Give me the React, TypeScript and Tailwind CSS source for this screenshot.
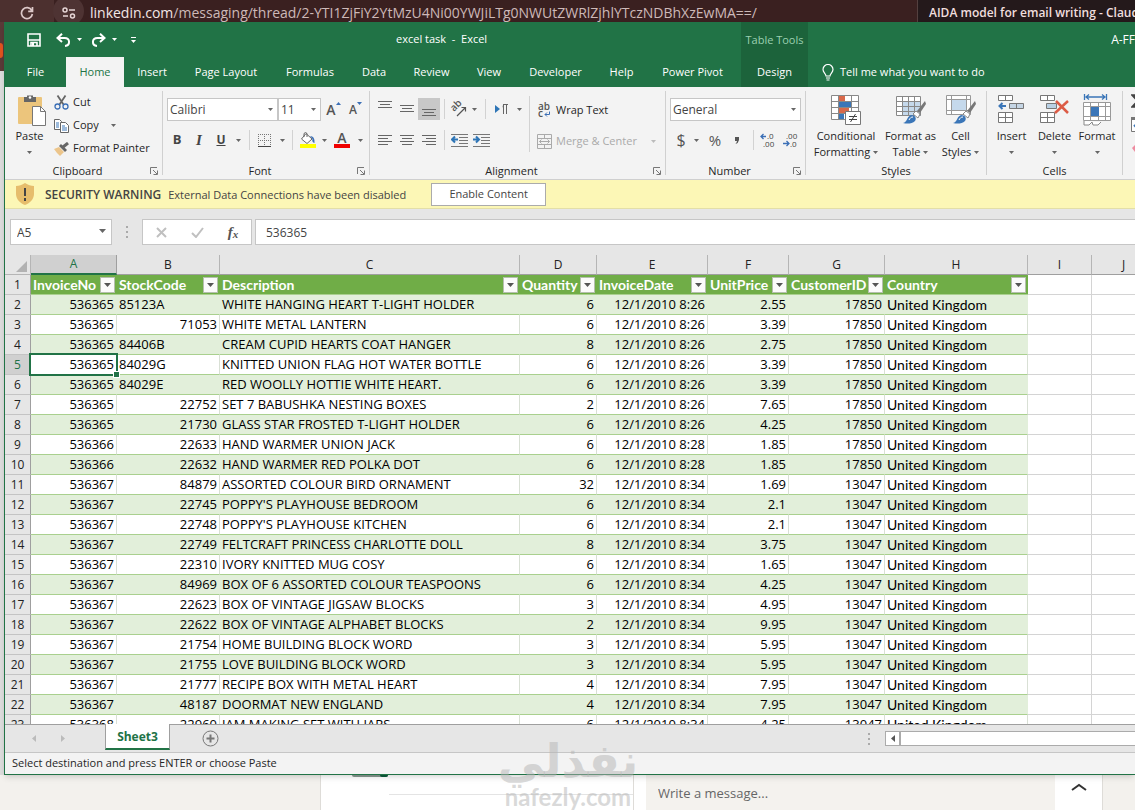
import type { ReactNode } from "react";
import clsx from "clsx";

type Row = [string, string, string, string, string, string, string];

// invoice, stock code, description, quantity, time, price, customer
const rows: Row[] = [
  ["536365", "85123A", "WHITE HANGING HEART T-LIGHT HOLDER", "6", "8:26", "2.55", "17850"],
  ["536365", "71053", "WHITE METAL LANTERN", "6", "8:26", "3.39", "17850"],
  ["536365", "84406B", "CREAM CUPID HEARTS COAT HANGER", "8", "8:26", "2.75", "17850"],
  ["536365", "84029G", "KNITTED UNION FLAG HOT WATER BOTTLE", "6", "8:26", "3.39", "17850"],
  ["536365", "84029E", "RED WOOLLY HOTTIE WHITE HEART.", "6", "8:26", "3.39", "17850"],
  ["536365", "22752", "SET 7 BABUSHKA NESTING BOXES", "2", "8:26", "7.65", "17850"],
  ["536365", "21730", "GLASS STAR FROSTED T-LIGHT HOLDER", "6", "8:26", "4.25", "17850"],
  ["536366", "22633", "HAND WARMER UNION JACK", "6", "8:28", "1.85", "17850"],
  ["536366", "22632", "HAND WARMER RED POLKA DOT", "6", "8:28", "1.85", "17850"],
  ["536367", "84879", "ASSORTED COLOUR BIRD ORNAMENT", "32", "8:34", "1.69", "13047"],
  ["536367", "22745", "POPPY'S PLAYHOUSE BEDROOM", "6", "8:34", "2.1", "13047"],
  ["536367", "22748", "POPPY'S PLAYHOUSE KITCHEN", "6", "8:34", "2.1", "13047"],
  ["536367", "22749", "FELTCRAFT PRINCESS CHARLOTTE DOLL", "8", "8:34", "3.75", "13047"],
  ["536367", "22310", "IVORY KNITTED MUG COSY", "6", "8:34", "1.65", "13047"],
  ["536367", "84969", "BOX OF 6 ASSORTED COLOUR TEASPOONS", "6", "8:34", "4.25", "13047"],
  ["536367", "22623", "BOX OF VINTAGE JIGSAW BLOCKS", "3", "8:34", "4.95", "13047"],
  ["536367", "22622", "BOX OF VINTAGE ALPHABET BLOCKS", "2", "8:34", "9.95", "13047"],
  ["536367", "21754", "HOME BUILDING BLOCK WORD", "3", "8:34", "5.95", "13047"],
  ["536367", "21755", "LOVE BUILDING BLOCK WORD", "3", "8:34", "5.95", "13047"],
  ["536367", "21777", "RECIPE BOX WITH METAL HEART", "4", "8:34", "7.95", "13047"],
  ["536367", "48187", "DOORMAT NEW ENGLAND", "4", "8:34", "7.95", "13047"],
  ["536368", "22960", "JAM MAKING SET WITH JARS", "6", "8:34", "4.25", "13047"],
];

const columns = [
  { letter: "A", title: "InvoiceNo", width: "w-[86px]" },
  { letter: "B", title: "StockCode", width: "w-[103px]" },
  { letter: "C", title: "Description", width: "w-[300px]" },
  { letter: "D", title: "Quantity", width: "w-[77px]" },
  { letter: "E", title: "InvoiceDate", width: "w-[111px]" },
  { letter: "F", title: "UnitPrice", width: "w-[81px]" },
  { letter: "G", title: "CustomerID", width: "w-[96px]" },
  { letter: "H", title: "Country", width: "w-[143px]" },
  { letter: "I", title: "", width: "w-[64px]" },
  { letter: "J", title: "", width: "w-[64px]" },
];

const tabs = [
  { name: "File", width: "w-[61px]" },
  { name: "Home", width: "w-[58px]" },
  { name: "Insert", width: "w-[56px]" },
  { name: "Page Layout", width: "w-[92px]" },
  { name: "Formulas", width: "w-[76px]" },
  { name: "Data", width: "w-[52px]" },
  { name: "Review", width: "w-[63px]" },
  { name: "View", width: "w-[52px]" },
  { name: "Developer", width: "w-[81px]" },
  { name: "Help", width: "w-[51px]" },
  { name: "Power Pivot", width: "w-[91px]" },
];

function Svg({ w, h, children, className }: { w: number; h: number; children: ReactNode; className?: string }) {
  return (
    <svg width={w} height={h} viewBox={`0 0 ${w} ${h}`} fill="none" className={clsx("shrink-0", className)} aria-hidden>
      {children}
    </svg>
  );
}

function Caret({ className = "text-[#666]" }: { className?: string }) {
  return (
    <Svg w={5} h={3} className={className}>
      <path d="M0 0h5L2.5 3z" fill="currentColor" />
    </Svg>
  );
}

function Tool({ label, width, children, className }: { label: string; width: string; children: ReactNode; className?: string }) {
  return (
    <button type="button" aria-label={label} className={clsx("flex h-[22px] shrink-0 items-center justify-center", width, className)}>
      {children}
    </button>
  );
}

function Divider() {
  return <div className="h-5 w-px shrink-0 bg-[#d2d2d2]" />;
}

function Group({ name, width, launcher, children }: { name: string; width: string; launcher?: boolean; children: ReactNode }) {
  return (
    <section aria-label={name} className={clsx("flex shrink-0 flex-col", width)}>
      <div className="h-[76px]">{children}</div>
      <div className="flex h-4 items-center">
        <span className="flex-1 text-center">{name}</span>
        {launcher && (
          <button type="button" aria-label={`${name} settings`} className="mr-1">
            <Svg w={8} h={8}>
              <path d="M.5 7V.5H7M3 3l4 4M7.5 3.5v4h-4" stroke="#777" />
            </Svg>
          </button>
        )}
      </div>
    </section>
  );
}

function GroupLine() {
  return <div className="my-1 w-px shrink-0 bg-[#d0d0d0]" />;
}

function Combo({ label, value, width }: { label: string; value: string; width: string }) {
  return (
    <div className={clsx("relative shrink-0", width)}>
      <select aria-label={label} className="h-[23px] w-full appearance-none border border-[#c6c6c6] bg-white pl-[2px] text-[12px] text-[#444]">
        <option>{value}</option>
      </select>
      <Caret className="pointer-events-none absolute top-[10px] right-[5px] text-[#666]" />
    </div>
  );
}

function Lines({ rows }: { rows: [number, number][] }) {
  return (
    <Svg w={15} h={rows.length * 3 + 1}>
      {rows.map(([from, to], i) => (
        <path key={i} d={`M${from} ${1.5 + i * 3}H${to}`} stroke="#666" />
      ))}
    </Svg>
  );
}

function IndentIcon({ right }: { right?: boolean }) {
  return (
    <Svg w={17} h={14}>
      <path d="M0 1.5h17M8 4.5h9M8 7.5h9M8 10.5h9M0 13.5h17" stroke="#777" />
      <path d={right ? "M0 6.5h5M3 3.5l3 3-3 3" : "M2 6.5h5M4 3.5l-3 3 3 3"} stroke="#2e75b6" strokeWidth="2" />
    </Svg>
  );
}

function Brush() {
  return (
    <>
      <path d="M29 7L21 17l3 2 6-9z" fill="#777" />
      <path d="M20 17l4 3-2 4-5-4z" fill="#fff" stroke="#888" />
      <path d="M7 29c5-1 3-6 8-8 4 0 6 3 4 6-3 3-8 3-12 2z" fill="#3b76b8" />
      <path d="M13 26c1-2 2-3 4-3" stroke="#fff" />
    </>
  );
}

function BigButton({ icon, width, lines, menu }: { icon: ReactNode; width: string; lines: string[]; menu?: boolean }) {
  return (
    <button type="button" className={clsx("flex shrink-0 flex-col items-center pt-[7px]", width)}>
      {icon}
      <span className="mt-[2px] flex h-4 items-center whitespace-nowrap">{lines[0]}</span>
      <span className="flex h-4 items-center gap-[3px] whitespace-nowrap">
        {lines[1]}
        {menu && <Caret />}
      </span>
    </button>
  );
}

function BrowserBar() {
  return (
    <div className="flex h-[22px] shrink-0 overflow-hidden bg-[#3a2020] font-['Open_Sans',sans-serif]">
      <div className="flex w-[54px] items-center bg-[#4c302f] pt-1 pl-[20px]">
        <Svg w={14} h={14}>
          <path d="M11.8 4.5A5.5 5.5 0 1 0 12.4 8M12.5 1v4.3H8.2" stroke="#dcc8c8" strokeWidth="1.7" />
        </Svg>
      </div>
      <div className="flex min-w-0 flex-1 items-center">
        <div className="-ml-px flex h-[30px] w-[31px] shrink-0 items-center justify-center rounded-full bg-[#4e3333] pt-1">
          <Svg w={14} h={12}>
            <circle cx="3" cy="3" r="2" stroke="#e6d6d6" strokeWidth="1.5" />
            <path d="M7 3h6M1 9h5" stroke="#e6d6d6" strokeWidth="1.5" />
            <circle cx="10.5" cy="9" r="2" stroke="#e6d6d6" strokeWidth="1.5" />
          </Svg>
        </div>
        <span className="ml-[6px] pt-[3px] text-[14px] leading-[19px] whitespace-nowrap text-[#cdb9b8]">
          <span className="text-[#f3e6e6]">linkedin.com</span>/messaging/thread/2-YTI1ZjFiY2YtMzU4Ni00YWJiLTg0NWUtZWRlZjhlYTczNDBhXzEwMA==/
        </span>
      </div>
      <div className="w-[218px] shrink-0 overflow-hidden border-l border-[#54403f] bg-[#24191b] pt-1 pl-[11px] text-[12px] leading-[18px] font-semibold whitespace-nowrap text-[#f0dede]">
        AIDA model for email writing - Claude
      </div>
    </div>
  );
}

function TitleBar() {
  return (
    <header className="shrink-0 bg-[#217346] text-white">
      <div className="flex h-[35px]">
        <div className="flex flex-1 items-center pl-[22px]">
          <button type="button" aria-label="Save">
            <Svg w={14} h={14}>
              <path d="M1 1h12v12H1z" stroke="#fff" strokeWidth="1.6" />
              <path d="M1 7h12M4 13V9.5h6V13" stroke="#fff" strokeWidth="1.6" />
              <path d="M5 10h2v3H5z" fill="#fff" />
            </Svg>
          </button>
          <button type="button" aria-label="Undo" className="ml-[15px] flex items-center gap-[6px]">
            <Svg w={15} h={14}>
              <path d="M6 .8L1.5 5 6 9M2 5h6.500c6 0 6 7.500.5 8" stroke="#fff" strokeWidth="2" />
            </Svg>
            <Caret className="text-white" />
          </button>
          <button type="button" aria-label="Redo" className="ml-[9px] flex items-center gap-[6px]">
            <Svg w={15} h={14}>
              <path d="M9 .8L13.5 5 9 9M13 5H6.500c-6 0-6 7.500-.5 8" stroke="#fff" strokeWidth="2" />
            </Svg>
            <Caret className="text-white" />
          </button>
          <button type="button" aria-label="Customize toolbar" className="ml-[14px]">
            <Svg w={5} h={6}>
              <path d="M0 .5h5" stroke="#fff" />
              <path d="M0 3h5L2.5 6z" fill="#fff" />
            </Svg>
          </button>
        </div>
        <h1 className="flex w-[345px] items-center whitespace-pre text-[11px]">excel task  -  Excel</h1>
        <div className="flex w-[67px] items-center justify-center bg-[#1c633b] pt-[2px] whitespace-nowrap text-[#9bd0b1]">Table Tools</div>
        <div className="flex w-[327px] items-center justify-end overflow-hidden text-[12px] whitespace-nowrap">A-FF</div>
      </div>
      <nav className="flex h-[30px] items-stretch">
        {tabs.map((tab) => (
          <button
            key={tab.name}
            type="button"
            className={clsx("shrink-0 whitespace-nowrap", tab.width, tab.name === "Home" && "bg-[#f3f3f3] text-[#217346]")}
          >
            {tab.name}
          </button>
        ))}
        <button type="button" className="ml-[3px] w-[67px] shrink-0 bg-[#1c633b]">
          Design
        </button>
        <button type="button" className="ml-[14px] flex items-center gap-[6px] whitespace-nowrap">
          <Svg w={12} h={17}>
            <path d="M4 12c0-2-3-3.500-3-6.500a5 5 0 0 1 10 0C11 8.500 8 10 8 12zM4 14h4M4.500 16h3" stroke="#fff" strokeWidth="1.2" />
          </Svg>
          Tell me what you want to do
        </button>
      </nav>
    </header>
  );
}

function ClipboardGroup() {
  return (
    <Group name="Clipboard" width="w-[157px]" launcher>
      <div className="flex">
        <BigButton
          width="w-[49px]"
          lines={["Paste", ""]}
          menu
          icon={
            <Svg w={30} h={32} className="ml-1">
              <rect x="1" y="3" width="24" height="27" rx="1" fill="#ecc57c" />
              <path d="M7 3h3V1.500h6V3h3v5H7z" fill="#666" />
              <circle cx="13" cy="3.5" r="1.3" fill="#fff" />
              <path d="M15.5 12.500h8l5 5v14h-13z" fill="#fff" stroke="#777" />
              <path d="M23.5 12.500v5h5" stroke="#777" />
            </Svg>
          }
        />
        <div className="flex flex-col pt-[4px]">
          <button type="button" className="flex h-[23px] items-center gap-[4px]">
            <Svg w={15} h={15}>
              <path d="M3.5.5l6 9M11.500.5l-6 9" stroke="#666" strokeWidth="1.8" />
              <circle cx="3.5" cy="11.5" r="2.5" stroke="#3b6fb6" strokeWidth="1.3" />
              <circle cx="11.5" cy="11.5" r="2.5" stroke="#3b6fb6" strokeWidth="1.3" />
            </Svg>
            Cut
          </button>
          <button type="button" className="flex h-[23px] items-center gap-[4px]">
            <Svg w={15} h={14}>
              <path d="M.5.5h5l2 2v8h-7z" fill="#fff" stroke="#666" />
              <path d="M6.500 3.500h5l3 3v7h-8z" fill="#fff" stroke="#666" />
              <path d="M2 4h3M2 6h3M2 8h3M8 7h3M8 9h5M8 11h5" stroke="#3b76b8" />
            </Svg>
            Copy
            <span className="ml-2">
              <Caret />
            </span>
          </button>
          <button type="button" className="flex h-[23px] items-center gap-[4px] whitespace-nowrap">
            <Svg w={15} h={14}>
              <path d="M0 7l5-2 5 5-4 4c-2-2-4-4-6-7z" fill="#ecc58b" />
              <path d="M5 4l2-2 6 6-2 2z" fill="#666" />
              <path d="M9 5l5-4" stroke="#666" strokeWidth="3" />
            </Svg>
            Format Painter
          </button>
        </div>
      </div>
    </Group>
  );
}

function FontGroup() {
  return (
    <Group name="Font" width="w-[206px]" launcher>
      <div className="flex items-center pt-[11px] pl-1">
        <Combo label="Font family" value="Calibri" width="w-[111px]" />
        <Combo label="Font size" value="11" width="w-[43px]" />
        <Tool label="Increase font size" width="w-[25px]" className="text-[14px] font-semibold text-[#555]">
          A
          <Svg w={5} h={3} className="mb-3">
            <path d="M0 3h5L2.5 0z" fill="#3b6fb6" />
          </Svg>
        </Tool>
        <Tool label="Decrease font size" width="w-[19px]" className="text-[12px] font-semibold text-[#555]">
          A
          <Svg w={5} h={3} className="mb-3">
            <path d="M0 0h5L2.5 3z" fill="#3b6fb6" />
          </Svg>
        </Tool>
      </div>
      <div className="flex items-center pt-[8px] pl-[3px] text-[#444]">
        <Tool label="Bold" width="w-[22px]" className="text-[13px] font-bold">B</Tool>
        <Tool label="Italic" width="w-[22px]" className="font-['Liberation_Serif',serif] text-[15px] font-bold italic">I</Tool>
        <Tool label="Underline" width="w-[22px]" className="text-[12px] font-bold underline">U</Tool>
        <Tool label="Underline style" width="w-[13px]"><Caret /></Tool>
        <div className="w-[4px]" />
        <Divider />
        <Tool label="Borders" width="w-[28px]">
          <Svg w={13} h={13}>
            <path d="M.5 0v12M6.500 0v12M12.500 0v12" stroke="#777" strokeDasharray="1 1" />
            <path d="M0 .5h13M0 6.500h13" stroke="#777" strokeDasharray="1 1" />
            <path d="M0 12.500h13" stroke="#444" />
          </Svg>
        </Tool>
        <Tool label="Border style" width="w-[8px]"><Caret /></Tool>
        <div className="w-[6px]" />
        <Divider />
        <Tool label="Fill color" width="w-[28px]">
          <Svg w={17} h={16}>
            <path d="M7 1.500L13 7l-5 4.500L2.500 7z" fill="#fff" stroke="#666" />
            <path d="M5 5V1.500Q6.500-.5 8 1.500V5" stroke="#666" />
            <path d="M11 4q5 0 4.500 7-3-1-2-4z" fill="#3b6fb6" />
            <path d="M1 12h16v4H1z" fill="#ff0" />
          </Svg>
        </Tool>
        <Tool label="Fill color options" width="w-[7px]"><Caret /></Tool>
        <Tool label="Font color" width="w-[28px]">
          <span className="flex flex-col items-center">
            <span className="h-[12px] text-[14px] leading-[12px] font-semibold text-[#555]">A</span>
            <span className="h-1 w-4 bg-[#f00000]" />
          </span>
        </Tool>
        <Tool label="Font color options" width="w-[8px]"><Caret /></Tool>
      </div>
    </Group>
  );
}

function AlignmentGroup() {
  return (
    <Group name="Alignment" width="w-[295px]" launcher>
      <div className="flex">
        <div>
          <div className="flex items-center pt-[11px] pl-[4px]">
            <Tool label="Top align" width="w-[22px]" className="pb-2"><Lines rows={[[0, 14], [2, 12], [0, 14]]} /></Tool>
            <Tool label="Middle align" width="w-[22px]"><Lines rows={[[0, 14], [2, 12], [0, 14]]} /></Tool>
            <Tool label="Bottom align" width="w-[22px]" className="bg-[#c8c8c8] pt-2"><Lines rows={[[0, 14], [2, 12], [0, 14]]} /></Tool>
            <div className="w-[4px]" />
            <Divider />
            <Tool label="Orientation" width="w-[26px]">
              <Svg w={17} h={16}>
                <text x="4" y="11" fontSize="10" fontWeight="600" fill="#555" transform="rotate(-45 4 11)">ab</text>
                <path d="M7 15l8-8M11.500 6.500H15.500V10.500" stroke="#555" strokeWidth="1.2" />
              </Svg>
            </Tool>
            <Tool label="Orientation options" width="w-[7px]"><Caret /></Tool>
            <div className="w-[7px]" />
            <Divider />
            <Tool label="Text direction" width="w-[30px]">
              <Svg w={13} h={12}>
                <path d="M0 2l5 4-5 4z" fill="#2e75b6" />
                <path d="M8.500 1v10M11.500 1v10M8 1.500h5" stroke="#666" />
                <path d="M9 1a3 3 0 0 0 0 5z" fill="#666" />
              </Svg>
            </Tool>
            <Tool label="Text direction options" width="w-[7px]"><Caret /></Tool>
          </div>
          <div className="flex items-center pt-[9px] pl-[4px]">
            <Tool label="Align left" width="w-[22px]"><Lines rows={[[0, 14], [0, 10], [0, 14], [0, 10]]} /></Tool>
            <Tool label="Center" width="w-[22px]"><Lines rows={[[0, 14], [2, 12], [0, 14], [2, 12]]} /></Tool>
            <Tool label="Align right" width="w-[22px]"><Lines rows={[[0, 14], [4, 14], [0, 14], [4, 14]]} /></Tool>
            <div className="w-[4px]" />
            <Divider />
            <Tool label="Decrease indent" width="w-[29px]"><IndentIcon /></Tool>
            <Tool label="Increase indent" width="w-[15px]"><IndentIcon right /></Tool>
          </div>
        </div>
        <div className="mt-[9px] ml-[6px] h-[56px] w-px bg-[#d2d2d2]" />
        <div className="pt-[12px] pl-[7px]">
          <button type="button" className="flex h-[22px] items-center gap-[4px] whitespace-nowrap">
            <Svg w={15} h={16}>
              <text x="1" y="8" fontSize="10" fontWeight="600" fill="#555">ab</text>
              <text x="1" y="15" fontSize="10" fontWeight="600" fill="#555">c</text>
              <path d="M12.500 9.500v3H8M10 10.500l-2 2 2 2" stroke="#3b6fb6" />
            </Svg>
            Wrap Text
          </button>
          <button type="button" disabled className="mt-[9px] flex h-[22px] items-center gap-[4px] whitespace-nowrap text-[#aaa]">
            <Svg w={15} h={15}>
              <path d="M.5.5h14v14H.5zM.5 4.500h14M.5 10.500h14M7.500.5v4M7.500 10.500v4M2.500 7.500h10M4.500 5.500l-2 2 2 2M10.500 5.500l2 2-2 2" stroke="#aaa" />
            </Svg>
            Merge &amp; Center
            <span className="ml-[10px]">
              <Caret className="text-[#bbb]" />
            </span>
          </button>
        </div>
      </div>
    </Group>
  );
}

function NumberGroup() {
  return (
    <Group name="Number" width="w-[139px]" launcher>
      <div className="pt-[11px] pl-1">
        <Combo label="Number format" value="General" width="w-[131px]" />
      </div>
      <div className="flex items-center pt-[8px] pl-[4px] text-[#555]">
        <Tool label="Currency" width="w-[22px]" className="text-[16px]">$</Tool>
        <Tool label="Currency options" width="w-[9px]"><Caret /></Tool>
        <Tool label="Percent" width="w-[28px]" className="text-[15px]">%</Tool>
        <Tool label="Comma style" width="w-[16px]">
          <Svg w={6} h={8}>
            <path d="M1 1h4v3Q4.500 7 1.500 8 3 6 3 5H1z" fill="#555" />
          </Svg>
        </Tool>
        <div className="w-[8px]" />
        <Divider />
        <Tool label="Increase decimal" width="w-[27px]">
          <Svg w={15} h={14}>
            <path d="M1 3.500h5M3.500 1L1 3.500 3.500 6" stroke="#3b6fb6" strokeWidth="1.3" />
            <text x="7" y="6" fontSize="8" fill="#444">.0</text>
            <text x="3" y="14" fontSize="8" fill="#444">.00</text>
          </Svg>
        </Tool>
        <Tool label="Decrease decimal" width="w-[18px]">
          <Svg w={15} h={14}>
            <path d="M0 10.500h5.500M3.500 8L6 10.500 3.500 13" stroke="#3b6fb6" strokeWidth="1.3" />
            <text x="3" y="6" fontSize="8" fill="#444">.00</text>
            <text x="7" y="14" fontSize="8" fill="#444">.0</text>
          </Svg>
        </Tool>
      </div>
    </Group>
  );
}

function StylesGroup() {
  return (
    <Group name="Styles" width="w-[180px]">
      <div className="flex pl-[5px]">
        <BigButton
          width="w-[70px]"
          lines={["Conditional", "Formatting"]}
          menu
          icon={
            <Svg w={30} h={32}>
              <path d="M.5 1.500h27v24H.5z" fill="#fff" />
              <path d="M8 1h6v6H8zM8 13h10v6H8z" fill="#d9694a" />
              <path d="M8 7h12v6H8zM8 19h5v6H8z" fill="#3b76b8" />
              <path d="M.5 1.500h27v24H.5zM.5 7.500h27M.5 13.500h27M.5 19.500h27M7.500 1v24M20.500 1v24" stroke="#888" />
              <path d="M14.500 17.500h15v13h-15z" fill="#fff" stroke="#777" />
              <path d="M18 22.500h8M18 25.500h8M24.500 20l-5 8" stroke="#444" />
            </Svg>
          }
        />
        <BigButton
          width="w-[59px]"
          lines={["Format as", "Table"]}
          menu
          icon={
            <Svg w={30} h={32}>
              <path d="M.5 2.500h24v19H.5z" fill="#fff" />
              <path d="M7 8h18v14H7z" fill="#c5d9ec" />
              <path d="M.5 2.500h24v19H.5zM.5 7.500h24M.5 12.500h24M.5 17.500h24M6.500 2v19M12.500 2v19M18.500 2v19" stroke="#888" />
              <Brush />
            </Svg>
          }
        />
        <BigButton
          width="w-[41px]"
          lines={["Cell", "Styles"]}
          menu
          icon={
            <Svg w={30} h={32}>
              <path d="M.5 1.500h24v19H.5zM.5 5.500h24M.5 16.500h24M5.500 1v20M20.500 1v20" fill="#fff" stroke="#999" />
              <path d="M6 6h14v10H6z" fill="#c5d9ec" />
              <Brush />
            </Svg>
          }
        />
      </div>
    </Group>
  );
}

function CellsGroup() {
  return (
    <Group name="Cells" width="w-[135px]">
      <div className="flex pl-[3px]">
        <BigButton
          width="w-[43px]"
          lines={["Insert", ""]}
          menu
          icon={
            <Svg w={27} h={32}>
              <path d="M.5 1.500h14v5H.5zM7.500 1.500v5M.5 18.500h14v10H.5zM7.500 18.500v10M.5 23.500h14" fill="#fff" stroke="#777" />
              <path d="M11.500 9.500h14v5h-14zM18.500 9.500v5" fill="#c5d5e4" stroke="#777" />
              <path d="M2 12h6M4.500 9L1.500 12l3 3" stroke="#3b76b8" strokeWidth="2" />
            </Svg>
          }
        />
        <BigButton
          width="w-[43px]"
          lines={["Delete", ""]}
          menu
          icon={
            <Svg w={30} h={32}>
              <path d="M.5 1.500h14v5H.5zM7.500 1.500v5M.5 18.500h14v10H.5zM7.500 18.500v10M.5 23.500h14" fill="#fff" stroke="#777" />
              <path d="M6.500 9.500h10v5h-10z" fill="#b9d0e4" stroke="#777" />
              <path d="M16 7l12 12M28 7L15 19" stroke="#dc5b45" strokeWidth="2.5" />
            </Svg>
          }
        />
        <BigButton
          width="w-[42px]"
          lines={["Format", ""]}
          menu
          icon={
            <Svg w={28} h={32}>
              <path d="M1.500 0v6M23.500 0v6M3 3h19M6 .5L3 3l3 2.500M19 .5L22 3l-3 2.500" stroke="#3b76b8" strokeWidth="1.3" />
              <path d="M.5 8.500h27v18H.5z" fill="#fff" />
              <path d="M.5 8.500h27v18H.5zM.5 12.500h27M.5 22.500h27M7.500 8v18M15.500 8v18M22.500 8v18" stroke="#999" />
              <path d="M8 13h8v9H8z" fill="#3b76b8" />
              <path d="M1 27v4h5l3-3 1 3h5l3-3" fill="#fff" stroke="#888" />
            </Svg>
          }
        />
      </div>
    </Group>
  );
}

function EditingGroup() {
  return (
    <div className="flex min-w-0 flex-1 flex-col gap-[9px] overflow-hidden pt-[7px] pl-[8px]">
      <button type="button" aria-label="AutoSum">
        <Svg w={12} h={14}>
          <path d="M11 1.500H2L7 7l-5 5.500h9" stroke="#444" strokeWidth="2.5" />
        </Svg>
      </button>
      <button type="button" aria-label="Fill">
        <Svg w={14} h={15}>
          <path d="M.5.5h13v14H.5z" fill="#fff" stroke="#777" />
          <path d="M0 1.500h14" stroke="#777" strokeWidth="3" />
          <path d="M7 4v8M3 8l4 4 4-4" stroke="#3b76b8" strokeWidth="2" />
        </Svg>
      </button>
      <button type="button" aria-label="Clear">
        <Svg w={14} h={12}>
          <path d="M1 7l6-6 5 4-6 6H4z" fill="#ee8ba0" />
        </Svg>
      </button>
    </div>
  );
}

function SecurityBar() {
  return (
    <div role="alert" className="flex h-[29px] shrink-0 items-center border-b border-[#e3dfa8] bg-[#fcf7b6] text-[#444]">
      <Svg w={18} h={22} className="ml-[11px]">
        <path d="M9 0c3 2 6 3 9 3v8c0 5-4 9-9 11-5-2-9-6-9-11V3c3 0 6-1 9-3z" fill="#e6bd6c" />
        <path d="M9 5v8M9 15v3" stroke="#444" strokeWidth="2" />
      </Svg>
      <strong className="ml-[11px] pt-px text-[12px] font-semibold">SECURITY WARNING</strong>
      <span className="ml-[7px] pt-[2px]">External Data Connections have been disabled</span>
      <button type="button" className="ml-[25px] h-[23px] w-[115px] border border-[#ababab] bg-white">
        Enable Content
      </button>
    </div>
  );
}

function FormulaBar() {
  return (
    <div className="flex h-[46px] shrink-0 items-center bg-[#e6e6e6] pl-[5px] text-[#444]">
      <div className="relative w-[102px] shrink-0">
        <input aria-label="Name box" defaultValue="A5" className="h-[26px] w-full border border-[#c6c6c6] bg-white pl-[6px] text-[12px]" />
        <Svg w={7} h={4} className="pointer-events-none absolute top-[10px] right-[6px]">
          <path d="M0 0h7L3.500 4z" fill="#666" />
        </Svg>
      </div>
      <Svg w={2} h={12} className="ml-[14px]">
        <path d="M1 0v12" stroke="#aaa" strokeWidth="2" strokeDasharray="2 3" />
      </Svg>
      <div className="ml-[14px] flex h-[26px] w-[110px] shrink-0 items-center border border-[#c6c6c6] bg-white">
        <Tool label="Cancel" width="w-[36px]">
          <Svg w={11} h={11}>
            <path d="M1 1l9 9M10 1l-9 9" stroke="#c0c0c0" strokeWidth="2" />
          </Svg>
        </Tool>
        <Tool label="Enter" width="w-[36px]">
          <Svg w={13} h={11}>
            <path d="M1 6l4 4 7-9" stroke="#c0c0c0" strokeWidth="2" />
          </Svg>
        </Tool>
        <Tool label="Insert function" width="w-[36px]" className="font-['Liberation_Serif',serif] text-[15px] font-bold text-[#555] italic">
          f<span className="pt-1 text-[11px]">x</span>
        </Tool>
      </div>
      <input aria-label="Formula" defaultValue="536365" className="ml-[3px] h-[26px] min-w-0 flex-1 border border-r-0 border-[#c6c6c6] bg-white pl-[10px] text-[12px]" />
    </div>
  );
}

function FilterButton({ name }: { name: string }) {
  return (
    <button type="button" aria-label={`Filter ${name}`} className="flex h-4 w-[15px] shrink-0 items-center justify-center border border-[#b5bfae] bg-[#fbfbfb]">
      <Svg w={7} h={4}>
        <path d="M0 0h7L3.500 4z" fill="#555" />
      </Svg>
    </button>
  );
}

function Sheet() {
  return (
    <div className="min-h-0 flex-1 overflow-hidden bg-white">
      <table className="w-[1151px] min-w-full table-fixed border-separate border-spacing-0 font-['Open_Sans',sans-serif] text-[13px] leading-[19px] text-black">
        <colgroup>
          <col className="w-[26px]" />
          {columns.map((column) => (
            <col key={column.letter} className={column.width} />
          ))}
        </colgroup>
        <thead>
          <tr className="h-5 bg-[#e6e6e6] text-[12px] leading-[18px] text-[#222]">
            <td className="border-r border-b border-[#b5b5b5] p-0">
              <Svg w={11} h={11} className="mt-1 ml-auto mr-[3px]">
                <path d="M11 0v11H0z" fill="#b2b2b2" />
              </Svg>
            </td>
            {columns.map((column) => (
              <th
                key={column.letter}
                scope="col"
                className={clsx(
                  "border-r p-0 font-normal",
                  column.letter === "A"
                    ? "border-b-2 border-r-[#9f9f9f] border-b-[#217346] bg-[#d0d0d0] text-[#217346]"
                    : "border-b border-r-[#b5b5b5] border-b-[#9f9f9f]",
                )}
              >
                {column.letter}
              </th>
            ))}
          </tr>
        </thead>
        <tbody>
          <tr className="h-5">
            <RowHeader index={1} />
            {columns.map((column) =>
              column.title ? (
                <th key={column.letter} scope="col" className="border-b border-[#a9d08e] bg-[#70ad47] p-0 text-left font-['Lato',sans-serif] text-[14px] text-white">
                  <div className="flex items-center justify-between pr-[2px] pl-[2px]">
                    {column.title}
                    <FilterButton name={column.title} />
                  </div>
                </th>
              ) : (
                <td key={column.letter} className="border-r border-b border-[#d4d4d4]" />
              ),
            )}
          </tr>
          {rows.map((row, i) => (
            <DataRow key={i} index={i + 2} row={row} />
          ))}
        </tbody>
      </table>
    </div>
  );
}

function RowHeader({ index }: { index: number }) {
  return (
    <th
      scope="row"
      className={clsx(
        "border-r border-b border-r-[#9f9f9f] border-b-[#c4c4c4] p-0 text-center text-[12px] font-normal",
        index === 5 ? "bg-[#d0d0d0] text-[#217346]" : "bg-[#e6e6e6] text-[#222]",
      )}
    >
      {index}
    </th>
  );
}

function DataRow({ index, row }: { index: number; row: Row }) {
  const [invoice, stock, description, quantity, time, price, customer] = row;
  const banded = index % 2 === 0;
  const cell = clsx(
    "border-r border-b border-b-[#a9d08e] px-[2px] py-0 whitespace-nowrap",
    banded ? "border-r-[#e2efda] bg-[#e2efda]" : "border-r-[#d9e0d5]",
  );
  const numeric = clsx(cell, "text-right");

  return (
    <tr className="h-5">
      <RowHeader index={index} />
      <td className={clsx(numeric, "relative")}>
        {invoice}
        {index === 5 && (
          <div className="absolute -top-[2px] -right-[2px] -bottom-[2px] -left-[2px] z-10 border-2 border-[#217346]">
            <div className="absolute -right-[4px] -bottom-[4px] h-[7px] w-[7px] border border-white bg-[#217346]" />
          </div>
        )}
      </td>
      <td className={/[A-Z]/.test(stock) ? cell : numeric}>{stock}</td>
      <td className={cell}>{description}</td>
      <td className={numeric}>{quantity}</td>
      <td className={numeric}>12/1/2010 {time}</td>
      <td className={numeric}>{price}</td>
      <td className={numeric}>{customer}</td>
      <td className={clsx(cell, "border-r-[#a9d08e] font-['Lato',sans-serif] text-[14px]")}>United Kingdom</td>
      <td className="border-r border-b border-[#d4d4d4]" />
      <td className="border-r border-b border-[#d4d4d4]" />
    </tr>
  );
}

function SheetTabs() {
  return (
    <div className="flex h-[28px] shrink-0 border-t border-[#9f9f9f] bg-[#e6e6e6]">
      <div className="flex w-[100px] shrink-0 items-center gap-[25px] pl-[27px]">
        <button type="button" aria-label="Previous sheet">
          <Svg w={4} h={7}>
            <path d="M4 0v7L0 3.500z" fill="#bbb" />
          </Svg>
        </button>
        <button type="button" aria-label="Next sheet">
          <Svg w={4} h={7}>
            <path d="M0 0v7l4-3.500z" fill="#bbb" />
          </Svg>
        </button>
      </div>
      <button type="button" className="-mt-px h-[26px] w-[65px] shrink-0 border-x border-b-2 border-x-[#9f9f9f] border-b-[#217346] bg-white pt-[2px] text-[12px] font-bold text-[#217346]">
        Sheet3
      </button>
      <button type="button" aria-label="New sheet" className="ml-[32px]">
        <Svg w={17} h={17}>
          <circle cx="8.5" cy="8.5" r="7.5" stroke="#777" />
          <path d="M8.500 4.500v8M4.500 8.500h8" stroke="#777" strokeWidth="2" />
        </Svg>
      </button>
      <div className="flex-1" />
      <Svg w={2} h={12} className="mt-2">
        <path d="M1 0v12" stroke="#aaa" strokeWidth="2" strokeDasharray="2 3" />
      </Svg>
      <div className="mt-[6px] ml-[15px] flex h-[15px] w-[250px] shrink-0 border border-r-0 border-[#ababab] bg-white">
        <button type="button" aria-label="Scroll left" className="flex w-[15px] items-center justify-center border-r-2 border-[#ababab]">
          <Svg w={4} h={7}>
            <path d="M4 0v7L0 3.500z" fill="#555" />
          </Svg>
        </button>
      </div>
    </div>
  );
}

function MessagingPage() {
  return (
    <div className="flex h-[35px] shrink-0 bg-[#f3f1ed] font-['Open_Sans',sans-serif]">
      <div className="w-[320px] shrink-0" />
      <div className="w-[314px] shrink-0 border-x border-[#dedcd8] bg-white pl-[31px]">
        <div className="flex h-[2px] w-[36px] justify-end rounded-b-full bg-[#8a9992]">
          <div className="h-[2px] w-[8px] rounded-b-full bg-[#0b5c3b]" />
        </div>
        <div className="mt-[17px] ml-[37px] border-t border-[#e4e4e4]" />
      </div>
      <div className="flex min-w-0 flex-1 bg-white pl-[12px]">
        <input aria-label="Message" placeholder="Write a message..." className="h-full min-w-0 flex-1 bg-[#f4f2ee] pl-[12px] text-[13px] placeholder:text-[#666]" />
        <button type="button" aria-label="Expand" className="flex w-[48px] justify-center border-r border-[#dedcd8] pt-[7px]">
          <Svg w={16} h={9}>
            <path d="M1 8l7-5 7 5" stroke="#333" strokeWidth="2" />
          </Svg>
        </button>
      </div>
      <div className="w-[32px] shrink-0" />
    </div>
  );
}

export default function App() {
  return (
    <div className="relative flex h-screen flex-col overflow-hidden bg-[#f3f1ed]">
      <BrowserBar />
      <div className="flex min-h-0 flex-1">
        <div className="flex w-1 shrink-0 flex-col bg-[#dcdcdc]">
          <div className="h-[49px] bg-[#5a3a38] pt-[21px]">
            <div className="h-[15px] w-[3px] rounded-r-full bg-[#e0531f]" />
          </div>
        </div>
        <main className="z-10 flex min-w-0 flex-1 flex-col border-b border-l border-[#217346] bg-[#f3f3f3] font-['Open_Sans',sans-serif] text-[11px] text-[#262626] shadow-md">
          <TitleBar />
          <div className="flex h-[93px] shrink-0 overflow-hidden border-b border-[#cfcfcf] bg-[#f3f3f3]">
            <ClipboardGroup />
            <GroupLine />
            <FontGroup />
            <GroupLine />
            <AlignmentGroup />
            <GroupLine />
            <NumberGroup />
            <GroupLine />
            <StylesGroup />
            <GroupLine />
            <CellsGroup />
            <GroupLine />
            <EditingGroup />
          </div>
          <SecurityBar />
          <FormulaBar />
          <Sheet />
          <SheetTabs />
          <footer className="flex h-[22px] shrink-0 items-center border-t border-[#c6c6c6] bg-[#f3f3f3] pl-[7px]">
            Select destination and press ENTER or choose Paste
          </footer>
        </main>
      </div>
      <MessagingPage />
      <div className="pointer-events-none absolute bottom-0 left-[500px] z-20 flex w-[136px] flex-col items-center text-[#b4b4b4]/50">
        <span lang="ar" className="font-['DejaVu_Sans',sans-serif] text-[46px] leading-[46px] font-bold">نفذلي</span>
        <span className="font-['Lato',sans-serif] text-[24px] leading-[26px] font-bold">nafezly.com</span>
      </div>
    </div>
  );
}
